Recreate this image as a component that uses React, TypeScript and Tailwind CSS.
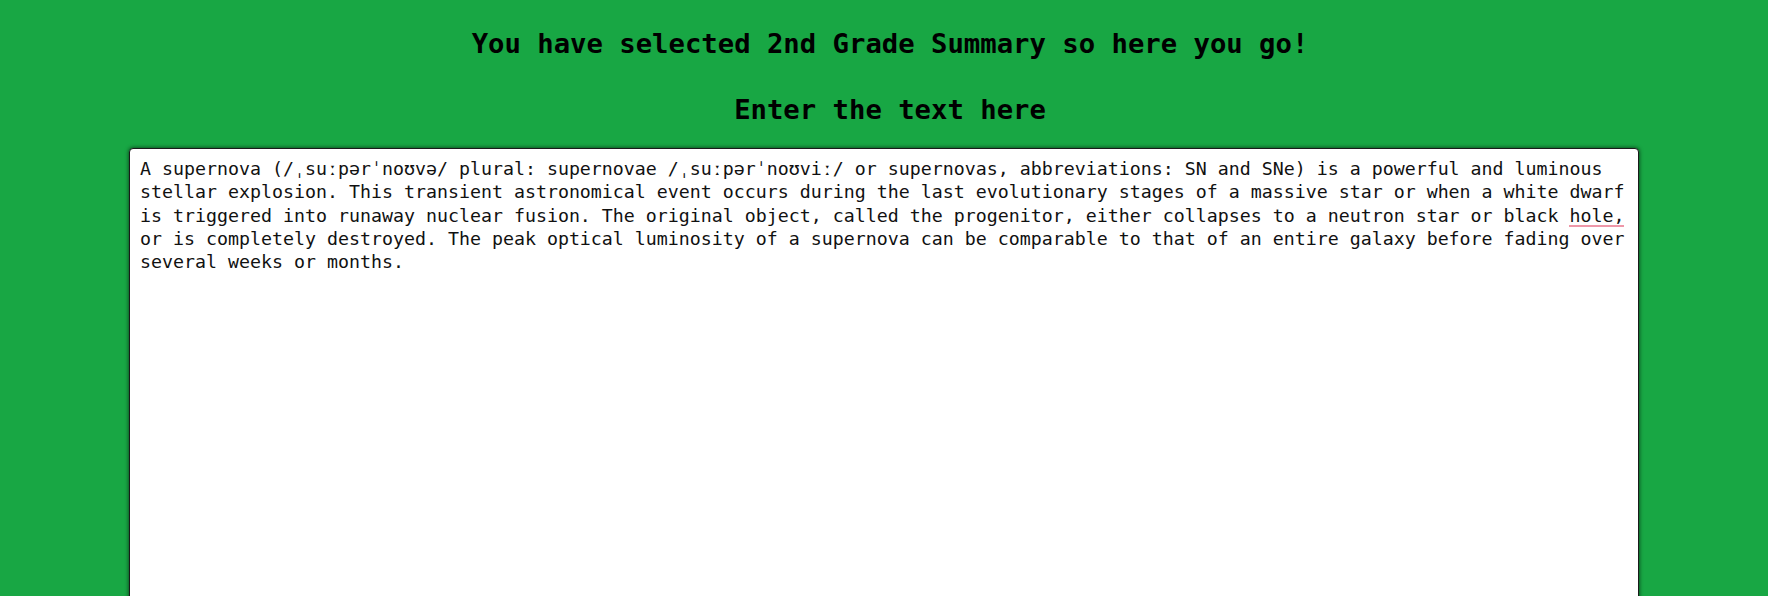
const passage =
  "A supernova (/ˌsuːpərˈnoʊvə/ plural: supernovae /ˌsuːpərˈnoʊviː/ or supernovas, abbreviations: SN and SNe) is a powerful and luminous stellar explosion. This transient astronomical event occurs during the last evolutionary stages of a massive star or when a white dwarf is triggered into runaway nuclear fusion. The original object, called the progenitor, either collapses to a neutron star or black hole, or is completely destroyed. The peak optical luminosity of a supernova can be comparable to that of an entire galaxy before fading over several weeks or months.";

export default function App() {
  return (
    <div className="h-screen overflow-hidden bg-[#18a744] font-['DejaVu_Sans_Mono','Liberation_Mono',monospace]">
      <div className="flex flex-col items-center pt-[28px]">
        <h1 className="pl-3 text-[27.25px] font-bold leading-[32px] text-black">
          You have selected 2nd Grade Summary so here you go!
        </h1>
        <h2 className="mt-[34px] pl-3 text-[27.25px] font-bold leading-[32px] text-black">
          Enter the text here
        </h2>

        <div className="relative mt-[22px]">
          <textarea
            spellCheck={false}
            defaultValue={passage}
            className="block h-[480px] w-[1510px] resize-none rounded border border-[#1a1a1a] bg-white px-[10px] pt-[8px] text-[18.27px] leading-[23.3px] text-[#111] shadow-[0_0_4px_rgba(0,0,0,0.7)] outline-none"
          />
          {/* spell-check squiggle under "hole," */}
          <div className="pointer-events-none absolute left-[1440px] top-[77px] h-[2px] w-[55px] bg-[#ee97a8]" />
        </div>
      </div>
    </div>
  );
}
